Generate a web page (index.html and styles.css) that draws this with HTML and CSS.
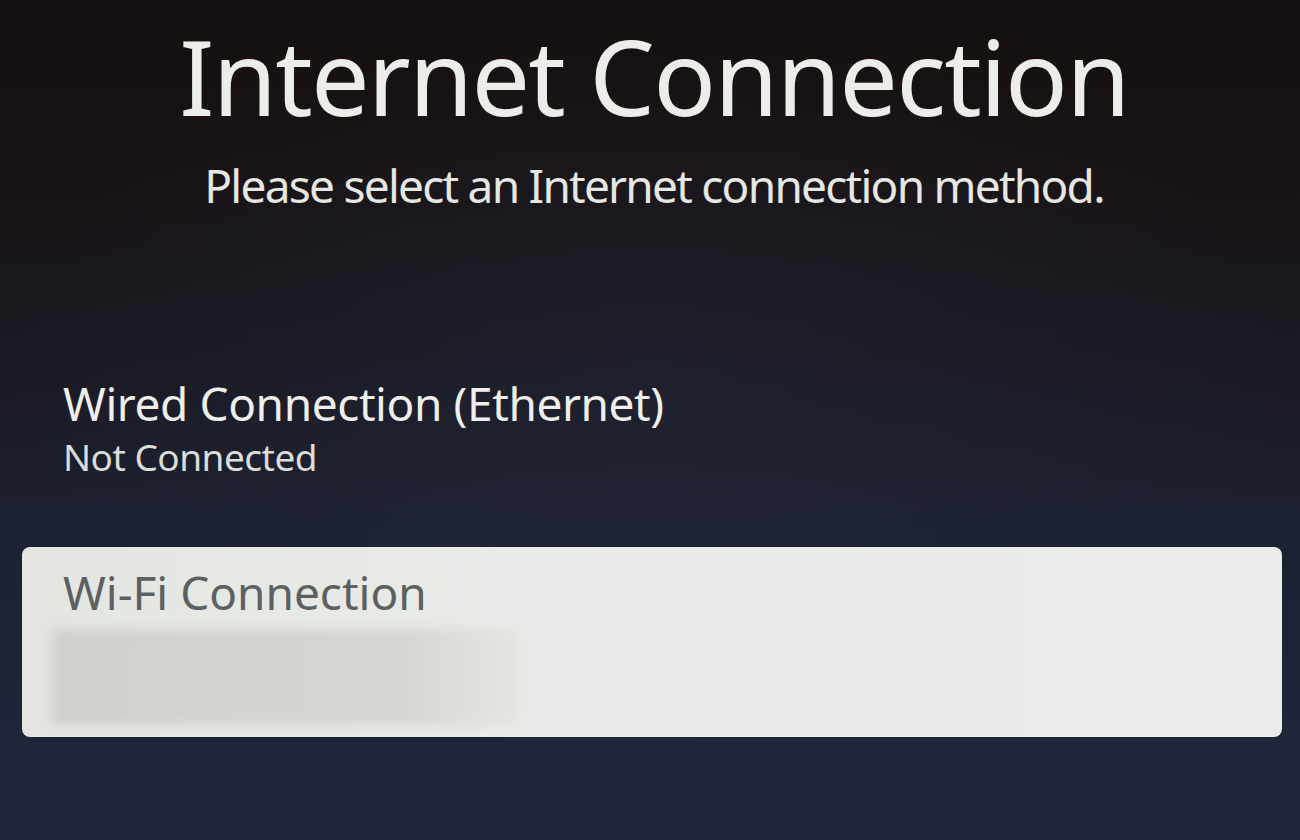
FILE: index.html
```html
<!DOCTYPE html>
<html lang="en">
<head>
<meta charset="utf-8">
<title>Internet Connection</title>
<link rel="stylesheet" href="styles.css">
</head>
<body>
<main class="screen">
  <header class="header">
    <h1 class="title">Internet Connection</h1>
    <p class="subtitle">Please select an Internet connection method.</p>
  </header>
  <section class="options">
    <div class="option">
      <div class="option-name">Wired Connection (Ethernet)</div>
      <div class="option-status">Not Connected</div>
    </div>
    <div class="option option-focused">
      <div class="option-name">Wi-Fi Connection</div>
      <div class="option-redacted"></div>
    </div>
  </section>
</main>
</body>
</html>
```

FILE: styles.css
```css
html, body {
  margin: 0;
  padding: 0;
}
body {
  width: 1300px;
  height: 840px;
  overflow: hidden;
  font-family: "Noto Sans", "Open Sans", sans-serif;
  background:
    radial-gradient(ellipse 70% 60% at 50% 45%, rgba(40, 44, 62, 0.35), rgba(0,0,0,0) 70%),
    linear-gradient(180deg, #160f10 0%, #181314 20%, #1a1922 42%, #1c2131 62%, #1e2538 85%, #1f2639 100%);
}
.screen {
  display: flex;
  flex-direction: column;
  height: 840px;
}
.header {
  display: flex;
  flex-direction: column;
  align-items: center;
  padding-top: 24px;
  padding-left: 8px;
}
.title {
  margin: 0;
  font-size: 104px;
  line-height: 104px;
  font-weight: 400;
  color: #ecece8;
  letter-spacing: -1.8px;
}
.subtitle {
  margin: 30px 0 0;
  font-size: 46px;
  line-height: 54px;
  color: #e6e6e2;
  letter-spacing: -1.75px;
}
.options {
  display: flex;
  flex-direction: column;
  padding: 0 18px 0 22px;
  margin-top: 164px;
}
.option {
  padding: 0 0 0 41px;
}
.option-name {
  font-size: 46px;
  line-height: 54px;
  color: #eeeeea;
  letter-spacing: -0.4px;
}
.option-status {
  margin-top: 5px;
  font-size: 37px;
  line-height: 44px;
  color: #dcdcd8;
  letter-spacing: -0.5px;
}
.option-focused {
  margin-top: 68px;
  height: 190px;
  box-sizing: border-box;
  border-radius: 8px;
  background: linear-gradient(90deg, #e3e6e0 0%, #e8ebe7 40%, #e9ece8 100%);
  padding: 18px 0 0 0;
}
.option-focused .option-name {
  color: #5d6062;
  padding-left: 41px;
  letter-spacing: 0;
}
.option-redacted {
  margin: 10px 0 0 30px;
  width: 468px;
  height: 96px;
  background: linear-gradient(90deg, #cfd1cc 0%, #d3d5d0 45%, #d4d6d1 75%, rgba(222,224,220,0.4) 100%);
  filter: blur(5px);
}
```
